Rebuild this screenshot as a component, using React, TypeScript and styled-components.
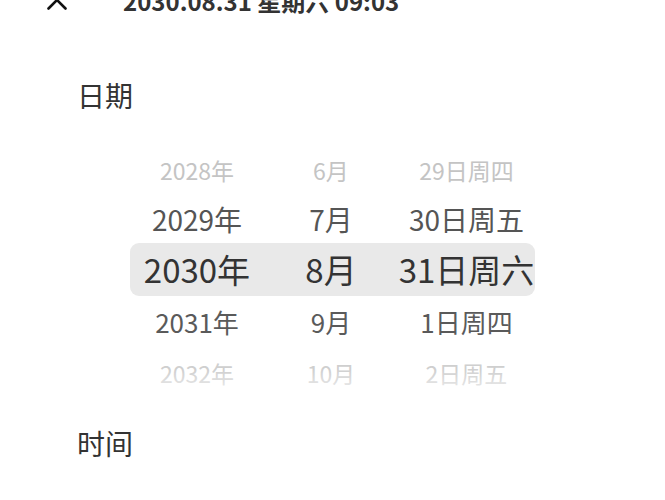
import React from 'react';
import styled, { createGlobalStyle } from 'styled-components';

const GlobalStyle = createGlobalStyle`
  html, body {
    margin: 0;
    padding: 0;
    background: #ffffff;
    overflow: hidden;
  }
  body {
    font-family: "Noto Sans CJK SC", "Noto Sans", sans-serif;
    color: #333333;
  }
`;

const Page = styled.div`
  width: 665px;
  height: 500px;
  overflow: hidden;
  display: flex;
  flex-direction: column;
`;

const Header = styled.div`
  display: flex;
  align-items: center;
  height: 40px;
  margin-top: -19px;
  padding-left: 47px;
  gap: 56px;
`;

const CloseButton = styled.div`
  width: 20px;
  height: 20px;
  display: flex;
  align-items: center;
  justify-content: center;
  margin-top: -2px;
`;

const Title = styled.div`
  font-size: 24px;
  font-weight: 700;
  color: #333333;
  line-height: 40px;
  white-space: nowrap;
`;

const SectionLabel = styled.div<{ $top: number }>`
  font-size: 28px;
  color: #333333;
  padding-left: 77px;
  margin-top: ${(p) => p.$top}px;
  line-height: 36px;
`;

const Wheel = styled.div`
  position: relative;
  margin: 33px 0 0 130px;
  width: 405px;
  display: flex;
  flex-direction: column;
`;

const Highlight = styled.div`
  position: absolute;
  left: 0;
  right: 0;
  top: 97px;
  height: 53px;
  background: #e9e9e9;
  border-radius: 9px;
`;

const Row = styled.div<{ $h: number }>`
  position: relative;
  display: grid;
  grid-template-columns: 134px 134px 137px;
  height: ${(p) => p.$h}px;
  align-items: center;
`;

const Cell = styled.div<{ $size: number; $color: string }>`
  text-align: center;
  font-size: ${(p) => p.$size}px;
  color: ${(p) => p.$color};
  line-height: 1;
  white-space: nowrap;
`;

const Fade = styled.div`
  position: absolute;
  left: 0;
  right: 0;
  bottom: 0;
  height: 30px;
  background: linear-gradient(rgba(255, 255, 255, 0), rgba(255, 255, 255, 0.8));
`;

type RowData = { cells: [string, string, string]; h: number; size: number; color: string };

const rows: RowData[] = [
  { cells: ['2028年', '6月', '29日周四'], h: 48, size: 23, color: '#c4c4c4' },
  { cells: ['2029年', '7月', '30日周五'], h: 49, size: 28, color: '#555555' },
  { cells: ['2030年', '8月', '31日周六'], h: 53, size: 33, color: '#333333' },
  { cells: ['2031年', '9月', '1日周四'], h: 51, size: 26, color: '#5a5a5a' },
  { cells: ['2032年', '10月', '2日周五'], h: 52, size: 23, color: '#cfcfcf' },
];

const CloseIcon = () => (
  <svg width="20" height="20" viewBox="0 0 20 20" fill="none">
    <path d="M1.5 1.5 L18.5 18.5 M18.5 1.5 L1.5 18.5" stroke="#111" strokeWidth="2.6" strokeLinecap="round" />
  </svg>
);

export default function App() {
  return (
    <Page>
      <GlobalStyle />
      <Header>
        <CloseButton>
          <CloseIcon />
        </CloseButton>
        <Title>2030.08.31 星期六 09:03</Title>
      </Header>
      <SectionLabel $top={56}>日期</SectionLabel>
      <Wheel>
        <Highlight />
        {rows.map((r, i) => (
          <Row key={i} $h={r.h}>
            {r.cells.map((c, j) => (
              <Cell key={j} $size={r.size} $color={r.color}>
                {c}
              </Cell>
            ))}
          </Row>
        ))}
        <Fade />
      </Wheel>
      <SectionLabel $top={26}>时间</SectionLabel>
    </Page>
  );
}
